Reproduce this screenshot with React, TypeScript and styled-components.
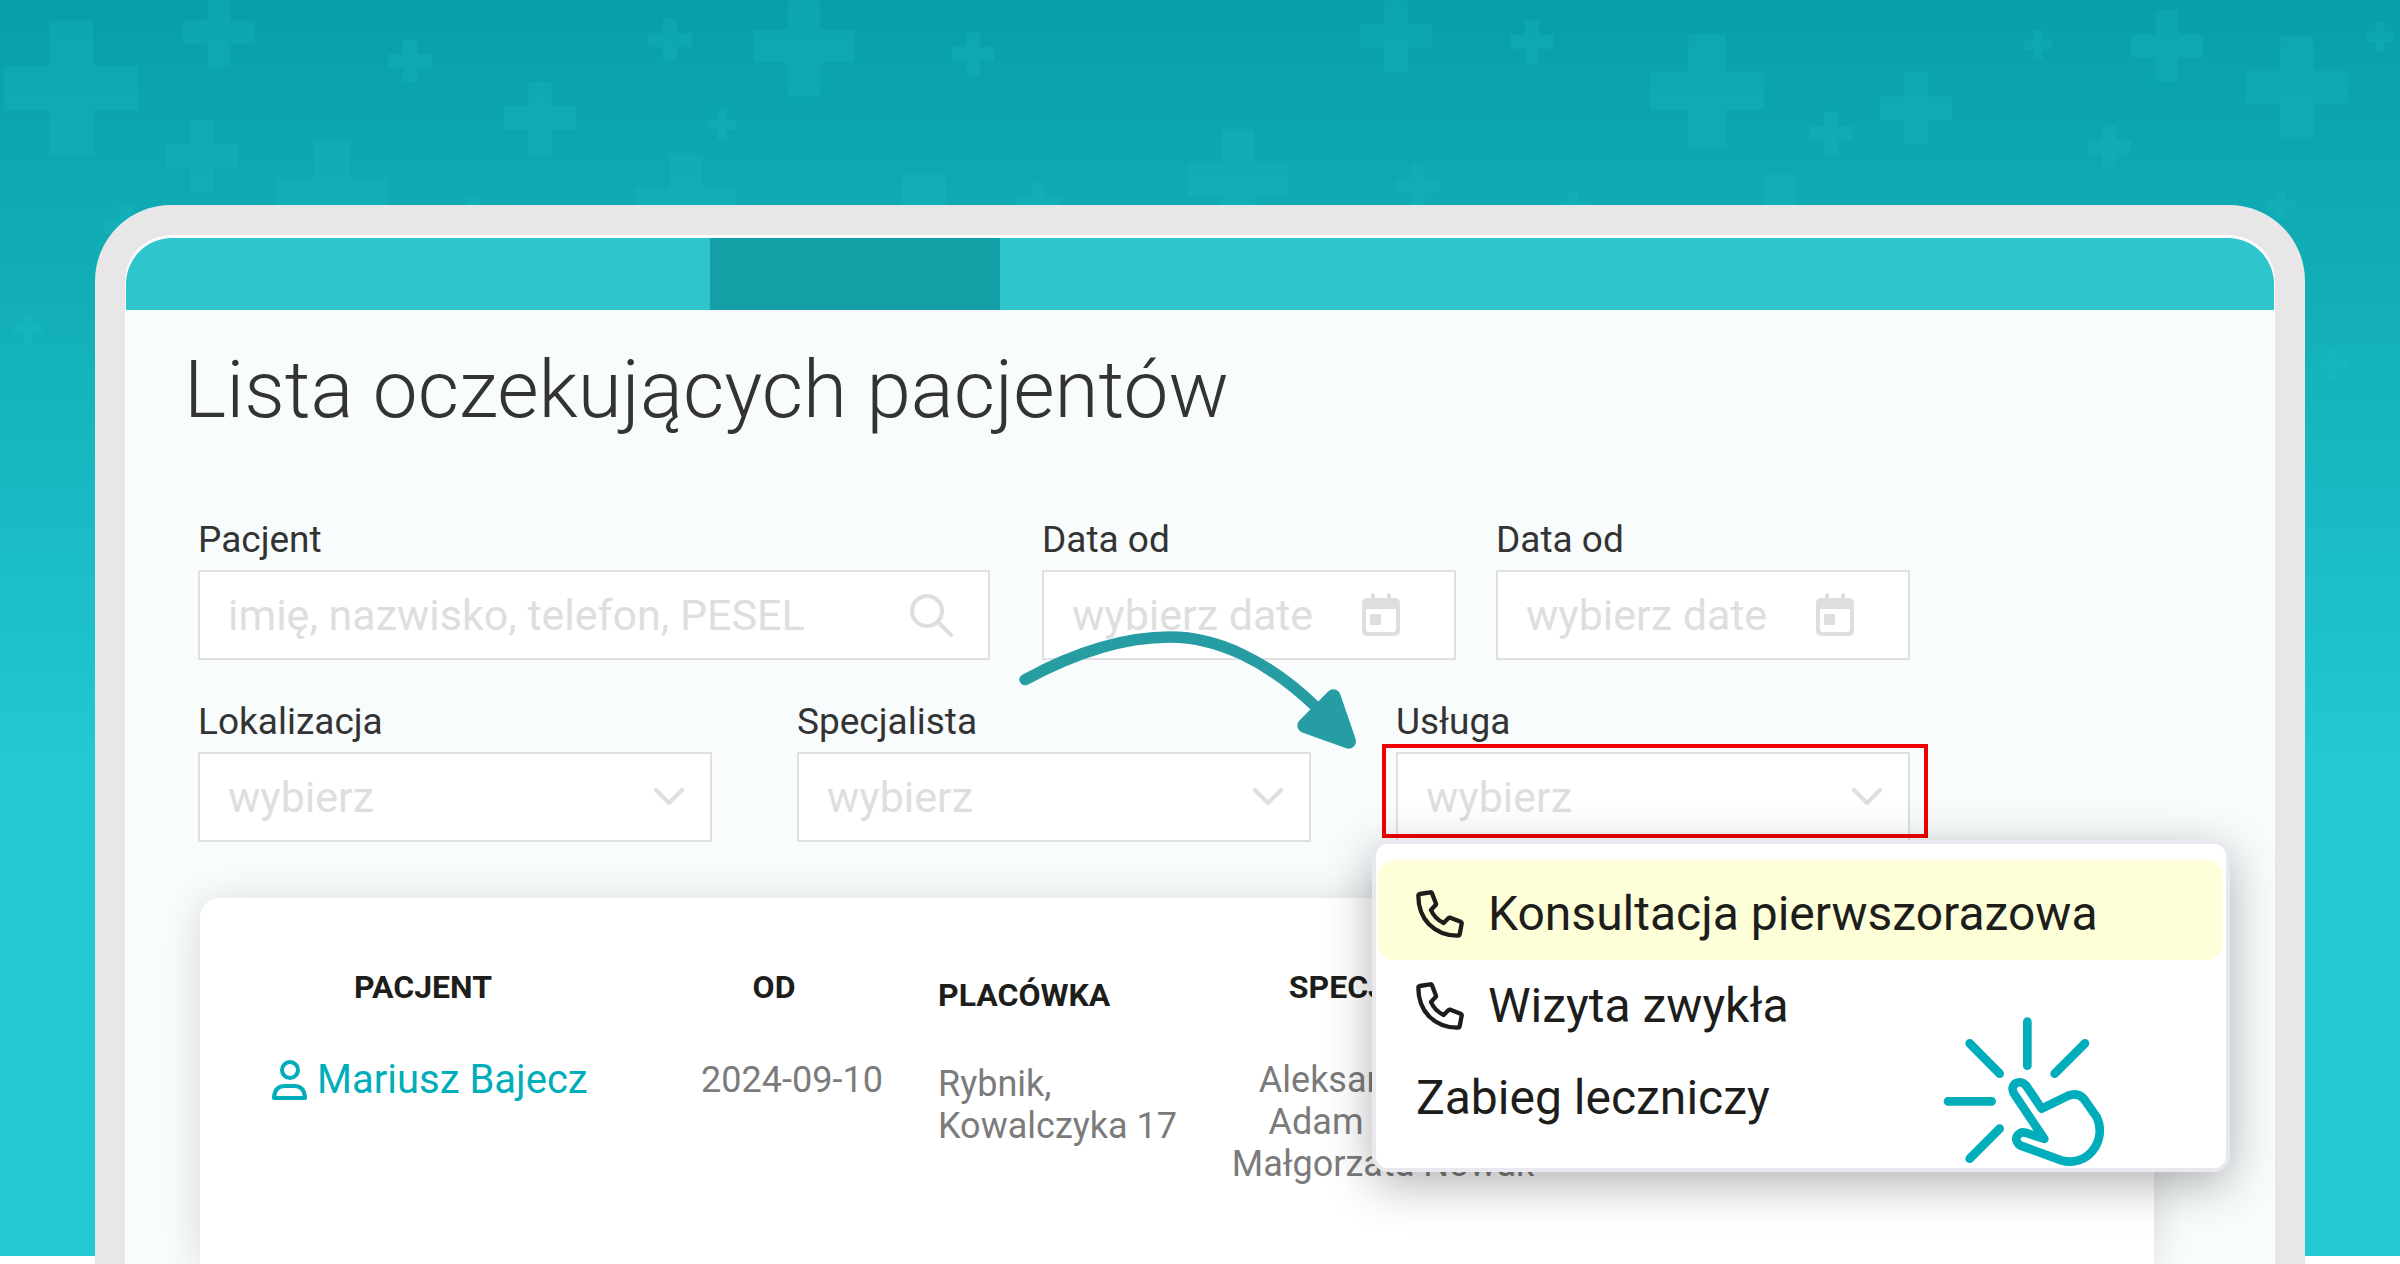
import React from 'react';
import styled, { createGlobalStyle } from 'styled-components';

const Global = createGlobalStyle`
  *, *::before, *::after { box-sizing: border-box; }
  body { margin: 0; background: #fff; font-family: Roboto, "Liberation Sans", sans-serif; }
`;

const Page = styled.div`
  position: relative;
  min-height: 100vh;
  padding: 205px 95px 0;
  overflow: hidden;
  display: flex;
`;

const Backdrop = styled.div`
  position: absolute;
  inset: 0 0 8px;
  background: linear-gradient(#089ea7 0, #0ca5ae 120px, #22c8d2 760px);
`;

const Crosses = styled.svg`
  display: block;
  width: 100%;
  height: 400px;
`;

const Frame = styled.div`
  position: relative;
  flex: 1;
  display: flex;
  flex-direction: column;
  height: calc(100vh - 205px);
  border: 30px solid #e8e6e7;
  border-bottom: 0;
  border-radius: 76px 76px 0 0;
  background: #f8fcfd;
`;

const NavBar = styled.nav`
  flex: none;
  display: flex;
  height: 72px;
  margin: 3px 1px 0;
  padding-left: 584px;
  border-radius: 46px 46px 0 0;
  background: #2fc5cc;
`;

const ActiveTab = styled.div`
  width: 290px;
  background: #149ea5;
`;

const Content = styled.main`
  flex: 1;
  min-height: 0;
  display: flex;
  flex-direction: column;
  padding: 32px 121px 0 73px;
`;

const Title = styled.h1`
  margin: 0 0 80px -14px;
  font-weight: 300;
  font-size: 80px;
  line-height: 96px;
  color: #333;
`;

const Filters = styled.form`
  display: flex;
  flex-direction: column;
  gap: 40px;
  width: 1712px;
  max-width: 100%;
`;

const TopFilters = styled.div`
  display: grid;
  grid-template-columns: 792fr 52fr 414fr 40fr 414fr;
  & > :nth-child(2) { grid-column: 3; }
  & > :nth-child(3) { grid-column: 5; }
`;

const BottomFilters = styled.div`
  display: grid;
  grid-template-columns: repeat(3, 1fr);
  column-gap: 85px;
`;

const Field = styled.div`
  position: relative;
  display: flex;
  flex-direction: column;
  gap: 8px;
  min-width: 0;
`;

const Label = styled.label`
  font-size: 37px;
  line-height: 44px;
  color: #333;
`;

const Box = styled.div<{ $end: number }>`
  display: flex;
  align-items: center;
  height: 90px;
  padding: 0 ${p => p.$end}px 0 28px;
  border: 2px solid #e0e0e0;
  background: #fff;
  color: #dedede;
`;

const TextInput = styled.input`
  flex: 1;
  min-width: 0;
  padding: 0;
  border: 0;
  outline: 0;
  background: none;
  font: 43px/50px Roboto, "Liberation Sans", sans-serif;
  color: #333;
  &::placeholder { color: #dedede; opacity: 1; }
`;

const Select = styled.select`
  flex: 1;
  min-width: 0;
  appearance: none;
  padding: 0;
  border: 0;
  outline: 0;
  background: none;
  font: 43px/50px Roboto, "Liberation Sans", sans-serif;
  color: #dedede;
`;

const Icon = styled.svg`
  flex: none;
  display: block;
`;

const Highlight = styled.div`
  position: absolute;
  left: -14px;
  right: -18px;
  bottom: 4px;
  height: 94px;
  border: 4px solid #f00000;
  pointer-events: none;
`;

const Menu = styled.div`
  position: absolute;
  z-index: 2;
  top: 140px;
  left: -24px;
  width: 858px;
  height: 332px;
  padding: 16px 3px 0 2px;
  border: 4px solid #e9e8ee;
  border-radius: 16px;
  background: #fff;
  box-shadow: 0 12px 48px rgba(0, 0, 0, 0.3);
`;

const MenuList = styled.ul`
  display: flex;
  flex-direction: column;
  margin: 0;
  padding: 0;
  list-style: none;
`;

const MenuItem = styled.button<{ $active?: boolean }>`
  display: flex;
  align-items: center;
  gap: 24px;
  width: 100%;
  height: ${p => (p.$active ? 100 : 92)}px;
  padding: ${p => (p.$active ? '8px' : '0')} 38px 0;
  border: 0;
  border-radius: 16px;
  background: ${p => (p.$active ? '#feffd8' : 'transparent')};
  font: 48px/56px Roboto, "Liberation Sans", sans-serif;
  color: #1d1d1b;
  text-align: left;
`;

const ClickMark = styled.svg`
  position: absolute;
  right: 113px;
  bottom: 0;
`;

const CardSlot = styled.div`
  flex: 1;
  min-height: 0;
  display: flex;
  flex-direction: column;
`;

const Card = styled.section`
  flex: 1;
  min-height: 0;
  margin: 56px 0 0 2px;
  padding: 69px 36px 0;
  border-radius: 20px 20px 0 0;
  background: #fff;
  box-shadow: 0 4px 40px rgba(0, 0, 0, 0.14);
  overflow: hidden;
`;

const Table = styled.table`
  width: 1322px;
  border-collapse: collapse;
  table-layout: fixed;
`;

const Col = styled.col<{ $width: number }>`
  width: ${p => p.$width}px;
`;

const Th = styled.th<{ $left?: boolean; $indent?: number }>`
  padding: ${p => (p.$left ? 8 : 0)}px 0 0 ${p => p.$indent ?? 0}px;
  height: 56px;
  vertical-align: top;
  text-align: ${p => (p.$left ? 'left' : 'center')};
  font-weight: 700;
  font-size: 32px;
  line-height: 40px;
  color: #1d1d1b;
`;

const Td = styled.td<{ $left?: boolean; $indent?: number }>`
  padding: ${p => (p.$left ? 40 : 36)}px 0 0 ${p => p.$indent ?? 0}px;
  vertical-align: top;
  text-align: ${p => (p.$left ? 'left' : 'center')};
  font-size: 36px;
  line-height: 42px;
  color: #7b7b7b;
  white-space: nowrap;
`;

const Patient = styled.a`
  display: flex;
  align-items: center;
  gap: 9px;
  font-size: 40px;
  color: #00adba;
  text-decoration: none;
`;

const Arrow = styled.svg`
  position: absolute;
  z-index: 1;
  top: 42px;
  left: -32px;
  pointer-events: none;
`;

const CROSSES: [number, number, number][] = [
  [71, 88, 134], [219, 32, 72], [410, 61, 43], [670, 40, 43], [804, 46, 101], [973, 54, 43],
  [540, 118, 72], [722, 125, 29], [202, 156, 72], [332, 196, 113], [686, 205, 101], [474, 219, 43],
  [924, 242, 134], [1038, 204, 43], [126, 227, 43], [28, 329, 29], [1238, 180, 101], [1396, 36, 72],
  [1532, 42, 43], [1707, 91, 113], [1916, 108, 72], [1831, 133, 43], [2038, 45, 29], [2167, 46, 72],
  [2297, 87, 101], [2380, 37, 29], [2109, 147, 43], [1418, 186, 43], [1573, 206, 29], [1780, 225, 101],
  [2281, 205, 29], [2333, 364, 29],
];

const crossPath = (cx: number, cy: number, size: number) => {
  const a = Math.round(size * 0.325);
  const b = (size - a) / 2;
  return `M${cx - a / 2} ${cy - size / 2}h${a}v${b}h${b}v${a}h${-b}v${b}h${-a}v${-b}h${-b}v${-a}h${b}z`;
};

const SearchIcon = () => (
  <Icon width="43" height="43" viewBox="0 0 43 43" fill="none" stroke="currentColor" strokeWidth="4" strokeLinecap="round" aria-hidden="true">
    <circle cx="17" cy="17" r="15" />
    <path d="M28 28 41 41" />
  </Icon>
);

const CalendarIcon = () => (
  <Icon width="38" height="44" viewBox="0 0 38 44" aria-hidden="true">
    <path fill="currentColor" fillRule="evenodd" d="M9 2a2 2 0 0 1 4 0v3h12V2a2 2 0 0 1 4 0v3h4a5 5 0 0 1 5 5v28a5 5 0 0 1-5 5H5a5 5 0 0 1-5-5V10a5 5 0 0 1 5-5h4zM4 16v21a3 3 0 0 0 3 2h24a3 3 0 0 0 3-2V16z" />
    <rect x="8" y="21" width="11" height="11" rx="1" fill="currentColor" />
  </Icon>
);

const Chevron = () => (
  <Icon width="32" height="20" viewBox="0 0 32 20" fill="none" stroke="currentColor" strokeWidth="4" strokeLinecap="round" strokeLinejoin="round" aria-hidden="true">
    <path d="M3 3 16 16 29 3" />
  </Icon>
);

const PhoneIcon = () => (
  <Icon width="48" height="48" viewBox="78 144 144 144" fill="none" stroke="currentColor" strokeWidth="13" strokeLinejoin="round" aria-hidden="true">
    <path d="M89 156 120 151Q124 150 126 154L138 185Q139 188 136 190L123 204Q134 230 161 243L175 229Q178 226 181 227L212 239Q216 241 215 245L209 277Q208 281 204 281 152 282 117 247 85 213 85 161 85 157 89 156Z" />
  </Icon>
);

const PersonIcon = () => (
  <Icon width="36" height="40" viewBox="0 0 36 40" fill="none" stroke="currentColor" strokeWidth="4" strokeLinejoin="round" aria-hidden="true">
    <circle cx="18" cy="10" r="8" />
    <path d="M2 38v-1q1-11 11-11h9q10 0 11 11v1z" />
  </Icon>
);

const SelectField = ({ id, label, children }: { id: string; label: string; children?: React.ReactNode }) => (
  <Field>
    <Label htmlFor={id}>{label}</Label>
    <Box $end={25}>
      <Select id={id} defaultValue=""><option value="">wybierz</option></Select>
      <Chevron />
    </Box>
    {children}
  </Field>
);

const DateField = ({ id, children }: { id: string; children?: React.ReactNode }) => (
  <Field>
    <Label htmlFor={id}>Data od</Label>
    <Box $end={54}>
      <TextInput id={id} placeholder="wybierz date" />
      <CalendarIcon />
    </Box>
    {children}
  </Field>
);

export default function App() {
  return (
    <>
      <Global />
      <Page>
        <Backdrop>
          <Crosses viewBox="0 0 2400 400" preserveAspectRatio="xMidYMin slice" aria-hidden="true">
            <g fill="#22c8d2" fillOpacity="0.18">
              {CROSSES.map(([x, y, s]) => <path key={`${x}-${y}`} d={crossPath(x, y, s)} />)}
            </g>
          </Crosses>
        </Backdrop>
        <Frame>
          <NavBar aria-label="Menu"><ActiveTab /></NavBar>
          <Content>
            <Title>Lista oczekujących pacjentów</Title>
            <Filters>
              <TopFilters>
                <Field>
                  <Label htmlFor="pacjent">Pacjent</Label>
                  <Box $end={35}>
                    <TextInput id="pacjent" placeholder="imię, nazwisko, telefon, PESEL" />
                    <SearchIcon />
                  </Box>
                </Field>
                <DateField id="data-1">
                  <Arrow width="360" height="200" viewBox="0 0 1080 600" aria-hidden="true">
                    <path d="M45 359C200 275 340 231 480 231 620 231 770 300 915 438" fill="none" stroke="#259da3" strokeWidth="34" strokeLinecap="round" />
                    <path d="M970 410 1016 544 884 497Z" fill="#259da3" stroke="#259da3" strokeWidth="44" strokeLinejoin="round" />
                  </Arrow>
                </DateField>
                <DateField id="data-2" />
              </TopFilters>
              <BottomFilters>
                <SelectField id="lokalizacja" label="Lokalizacja" />
                <SelectField id="specjalista" label="Specjalista" />
                <SelectField id="usluga" label="Usługa">
                  <Highlight />
                  <Menu>
                    <MenuList>
                      <li><MenuItem type="button" $active><PhoneIcon />Konsultacja pierwszorazowa</MenuItem></li>
                      <li><MenuItem type="button"><PhoneIcon />Wizyta zwykła</MenuItem></li>
                      <li><MenuItem type="button">Zabieg leczniczy</MenuItem></li>
                    </MenuList>
                    <ClickMark width="176" height="158" viewBox="111 90 528 474" fill="none" stroke="#00adba" strokeWidth="26" strokeLinecap="round" strokeLinejoin="round" aria-hidden="true">
                      <path d="M382 125V257M209 190 299 281M555 190 464 281M144 364H275M299 446 209 536" />
                      <path d="M342 341 433 477 376 458C350 452 338 484 362 497L484 541C560 564 624 482 590 411L552 357Q534 336 505 347L425 386 380 319C360 292 326 314 342 341Z" />
                    </ClickMark>
                  </Menu>
                </SelectField>
              </BottomFilters>
            </Filters>
            <CardSlot>
              <Card>
                <Table>
                  <colgroup>
                    <Col $width={374} /><Col $width={328} /><Col $width={270} /><Col $width={350} />
                  </colgroup>
                  <thead>
                    <tr><Th>PACJENT</Th><Th>OD</Th><Th $left>PLACÓWKA</Th><Th $indent={16}>SPECJALISTA</Th></tr>
                  </thead>
                  <tbody>
                    <tr>
                      <Td $indent={36}><Patient href="#pacjent"><PersonIcon />Mariusz Bajecz</Patient></Td>
                      <Td $indent={36}>2024-09-10</Td>
                      <Td $left>Rybnik,<br />Kowalczyka 17</Td>
                      <Td>Aleksander Bąk<br />Adam Kowalik<br />Małgorzata Nowak</Td>
                    </tr>
                  </tbody>
                </Table>
              </Card>
            </CardSlot>
          </Content>
        </Frame>
      </Page>
    </>
  );
}
